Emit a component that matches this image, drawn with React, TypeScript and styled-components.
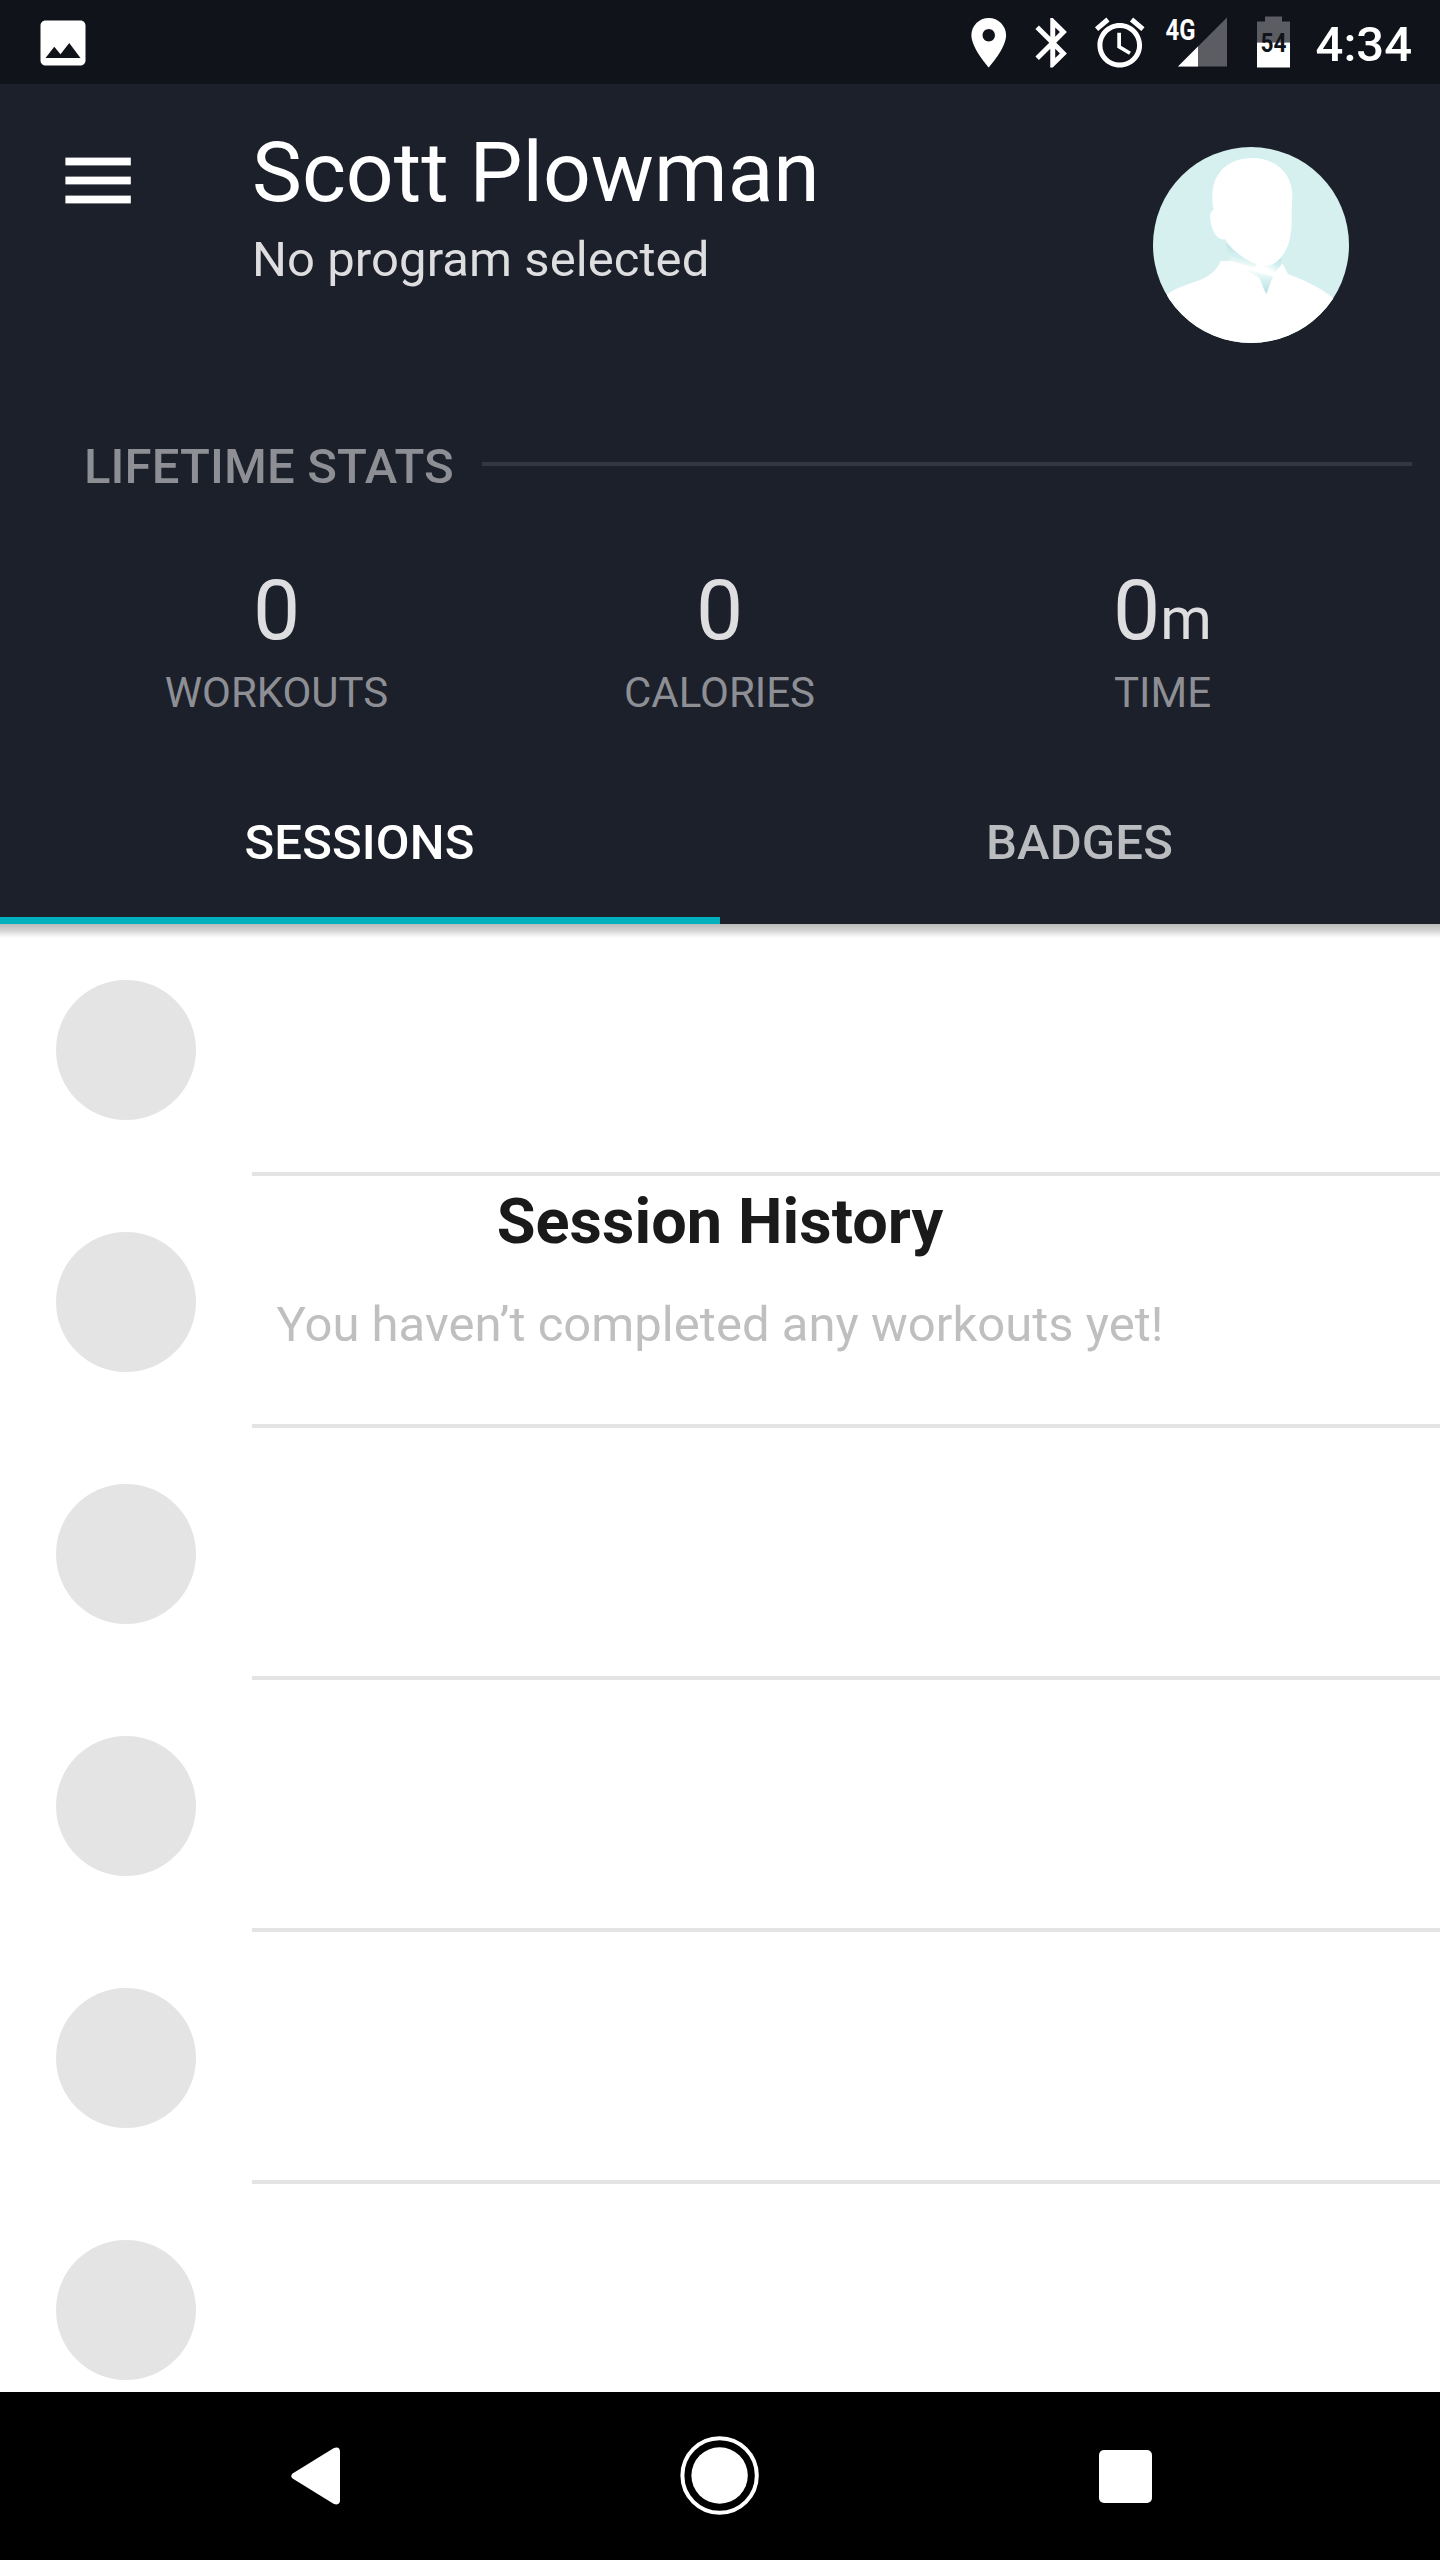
import React from "react";
import styled, { createGlobalStyle } from "styled-components";

const GlobalStyle = createGlobalStyle`
  *, *::before, *::after { box-sizing: border-box; }
  body { margin: 0; background: #ffffff; }
`;

const Screen = styled.div`
  display: flex;
  flex-direction: column;
  width: 1440px;
  height: 2560px;
  overflow: hidden;
  background: #ffffff;
  font-family: Roboto, "Liberation Sans", sans-serif;
`;

/* ---------- status bar ---------- */

const StatusBar = styled.div`
  flex: none;
  display: flex;
  align-items: flex-start;
  height: 84px;
  padding: 12.5px 28px 0 33px;
  background: #10131a;
`;

const StatusIcons = styled.div`
  display: flex;
  align-items: flex-start;
  margin-left: auto;
`;

const StatusIcon = styled.svg<{ $size: number; $gap?: number }>`
  display: block;
  flex: none;
  width: ${(p) => p.$size}px;
  height: ${(p) => p.$size}px;
  margin-right: ${(p) => p.$gap ?? 0}px;
  fill: #ffffff;
`;

const Indicator = styled.svg<{ $gap: number }>`
  display: block;
  flex: none;
  margin-right: ${(p) => p.$gap}px;
  font-family: Roboto, "Liberation Sans", sans-serif;
  font-weight: 700;
`;

const Clock = styled.div`
  color: #ffffff;
  font-size: 49px;
  font-weight: 500;
  line-height: 57px;
  margin-top: 3px;
  white-space: nowrap;
`;

/* ---------- header ---------- */

const Header = styled.header`
  position: relative;
  z-index: 1;
  flex: none;
  display: flex;
  flex-direction: column;
  height: 840px;
  background: #1c202b;

  &::after {
    content: "";
    position: absolute;
    left: 0;
    right: 0;
    top: 100%;
    height: 14px;
    background: linear-gradient(#bababa, #d2d2d2 45%, #f1f1f1 80%, #ffffff);
  }
`;

const ProfileRow = styled.div`
  display: flex;
  align-items: flex-start;
  height: 260px;
`;

const MenuButton = styled.button`
  flex: none;
  width: 252px;
  padding: 73px 0 0 65px;
  border: 0;
  background: none;

  svg { display: block; }
`;

const Identity = styled.div`
  padding-top: 39px;
  white-space: nowrap;
`;

const UserName = styled.h1`
  margin: 0;
  color: #ffffff;
  font-size: 84px;
  font-weight: 400;
  line-height: 99px;
`;

const Program = styled.p`
  margin: 9px 0 0;
  color: #dedee0;
  font-size: 49px;
  letter-spacing: 0.07px;
  line-height: 57px;
`;

const Avatar = styled.svg`
  display: block;
  flex: none;
  width: 196px;
  height: 196px;
  margin: 63px 91px 0 auto;
  border-radius: 50%;
  background: #d6f0ef;
`;

const SectionHeading = styled.div`
  display: flex;
  align-items: center;
  gap: 28px;
  margin: 94px 28px 0 84px;
`;

const SectionTitle = styled.h2`
  margin: 0;
  color: #8e8f95;
  font-size: 49px;
  font-weight: 500;
  letter-spacing: 0.14px;
  line-height: 57px;
  white-space: nowrap;
`;

const SectionRule = styled.div`
  flex: 1;
  height: 4px;
  margin-bottom: 5px;
  background: #343742;
`;

const Stats = styled.div`
  display: grid;
  grid-template-columns: repeat(3, 1fr);
  padding: 66px 56px 0 55px;
  text-align: center;
`;

const StatValue = styled.div`
  height: 99px;
  color: #dedee0;
  font-size: 84px;
  line-height: 99px;
`;

const StatUnit = styled.span`
  font-size: 58.8px;
  line-height: 1;
`;

const StatLabel = styled.div`
  margin-top: 8px;
  color: #8e8f95;
  font-size: 42px;
  line-height: 49px;
`;

const Tabs = styled.div`
  display: flex;
  margin-top: auto;
`;

const Tab = styled.button<{ $active?: boolean }>`
  flex: 1;
  height: 168px;
  padding: 12px 1px 0 0;
  border: 0;
  border-bottom: 7px solid ${(p) => (p.$active ? "#00b1bd" : "transparent")};
  background: none;
  color: ${(p) => (p.$active ? "#ffffff" : "#bbbcc0")};
  font-family: inherit;
  font-size: 49px;
  font-weight: 500;
  letter-spacing: 0.16px;
  line-height: 57px;
`;

/* ---------- session list ---------- */

const SessionList = styled.main`
  position: relative;
  flex: 1;
  min-height: 0;
  overflow: hidden;
`;

const PlaceholderRow = styled.div`
  display: flex;
  align-items: center;
  gap: 56px;
  height: 252px;
  padding-left: 56px;
`;

const PlaceholderDot = styled.div`
  flex: none;
  width: 140px;
  height: 140px;
  border-radius: 50%;
  background: #e4e4e4;
`;

const PlaceholderBody = styled.div`
  flex: 1;
  align-self: stretch;
  border-bottom: 4px solid #e4e4e4;
`;

const EmptyMessage = styled.div`
  position: absolute;
  top: 260px;
  left: 0;
  right: 0;
  text-align: center;
`;

const EmptyTitle = styled.h2`
  margin: 0;
  color: #1a1a1a;
  font-size: 63px;
  font-weight: 700;
  letter-spacing: 0.07px;
  line-height: 75px;
`;

const EmptyText = styled.p`
  margin: 37px 0 0;
  color: #bfbfbf;
  font-size: 49px;
  letter-spacing: 0.03px;
  line-height: 57px;
`;

/* ---------- navigation bar ---------- */

const NavBar = styled.nav`
  flex: none;
  display: flex;
  justify-content: center;
  height: 168px;
  background: #000000;
`;

const NavButton = styled.button`
  display: flex;
  align-items: center;
  justify-content: center;
  width: 405px;
  padding: 0;
  border: 0;
  background: none;

  svg { display: block; fill: #ffffff; }
`;

const HomeRing = styled.circle`
  fill: none;
  stroke: #ffffff;
  stroke-width: 4px;
`;

const stats = [
  { value: "0", label: "WORKOUTS" },
  { value: "0", label: "CALORIES" },
  { value: "0", unit: "m", label: "TIME" },
];

const AvatarPicture = () => (
  <Avatar viewBox="69 51 588 588">
    <defs>
      <linearGradient id="neck" gradientUnits="userSpaceOnUse" x1="330" y1="345" x2="318" y2="412">
        <stop offset="0" stopColor="#bfe5e7" />
        <stop offset="0.55" stopColor="#d6f0f0" />
        <stop offset="1" stopColor="#ffffff" />
      </linearGradient>
      <linearGradient id="neckRight" gradientUnits="userSpaceOnUse" x1="455" y1="385" x2="425" y2="428">
        <stop offset="0" stopColor="#c2e7e8" />
        <stop offset="0.5" stopColor="#d3efef" />
        <stop offset="1" stopColor="#ffffff" />
      </linearGradient>
      <linearGradient id="notch" x1="0" y1="0" x2="0" y2="1">
        <stop offset="0" stopColor="#ffffff" />
        <stop offset="0.45" stopColor="#d9f1f1" />
        <stop offset="1" stopColor="#b4dfe2" />
      </linearGradient>
      <filter id="soften" x="-10%" y="-10%" width="120%" height="120%">
        <feGaussianBlur stdDeviation="2" />
      </filter>
    </defs>
    <path
      fill="#ffffff"
      d="M60 540L108 497C135 470 185 462 225 443C248 431 262 416 272 394L300 392L440 420L458 401L474 432C520 449 570 472 612 506L700 700H50Z"
    />
    <g filter="url(#soften)">
      <path fill="url(#neck)" d="M288 342L300 391C330 404 365 412 400 418L400 390Z" />
      <path fill="url(#neckRight)" d="M380 395L375 414C400 422 420 425 438 425C446 414 452 404 456 388L430 385Z" />
      <path fill="url(#notch)" d="M345 416C362 430 380 436 388 445C396 460 401 480 409 492C415 480 420 458 430 440Z" />
    </g>
    <path
      fill="#ffffff"
      d="M367 84C295 84 247 128 247 200C247 218 248 228 251 238C238 248 238 265 244 284C250 308 262 330 285 328C300 352 325 375 352 389C378 407 405 410 425 404C452 394 477 352 480 322C488 290 483 250 487 200C488 125 430 84 367 84Z"
    />
  </Avatar>
);

export default function App() {
  return (
    <>
      <GlobalStyle />
      <Screen>
        <StatusBar>
          <StatusIcon $size={60} viewBox="0 0 24 24">
            <path d="M21 19V5c0-1.1-.9-2-2-2H5c-1.1 0-2 .9-2 2v14c0 1.1.9 2 2 2h14c1.1 0 2-.9 2-2zM8.5 13.5l2.5 3.01L14.5 12l4.5 6H5l3.5-4.5z" />
          </StatusIcon>
          <StatusIcons>
            <StatusIcon $size={59.5} $gap={4.8} viewBox="0 0 24 24">
              <path d="M12 2C8.13 2 5 5.13 5 9c0 5.25 7 13 7 13s7-7.75 7-13c0-3.87-3.13-7-7-7zm0 9.5c-1.38 0-2.5-1.12-2.5-2.5s1.12-2.5 2.5-2.5 2.5 1.12 2.5 2.5-1.12 2.5-2.5 2.5z" />
            </StatusIcon>
            <StatusIcon $size={59.5} $gap={7.2} viewBox="0 0 24 24">
              <path d="M17.71 7.71L12 2h-1v7.59L6.41 5 5 6.41 10.59 12 5 17.59 6.41 19 11 14.41V22h1l5.71-5.71-4.3-4.29 4.3-4.29zM13 5.83l1.88 1.88L13 9.59V5.83zm1.88 10.46L13 18.17v-3.76l1.88 1.88z" />
            </StatusIcon>
            <StatusIcon $size={59.5} $gap={15.5} viewBox="0 0 24 24">
              <path d="M22 5.72l-4.6-3.86-1.29 1.53 4.6 3.86L22 5.72zM7.88 3.39L6.6 1.86 2 5.71l1.29 1.53 4.59-3.85zM12.5 8H11v6l4.75 2.85.75-1.23-4-2.37V8zM12 4c-4.97 0-9 4.03-9 9s4.02 9 9 9c4.97 0 9-4.03 9-9s-4.03-9-9-9zm0 16c-3.87 0-7-3.13-7-7s3.13-7 7-7 7 3.13 7 7-3.13 7-7 7z" />
            </StatusIcon>
            <Indicator $gap={30} width="62" height="60" viewBox="1165 12.5 62 60">
              <path fill="#5c5d62" d="M1227 17V66H1178Z" />
              <path fill="#ffffff" d="M1198 46V66H1178Z" />
              <text x="1165.5" y="39" fontSize="29.5" fill="#ffffff" textLength="30" lengthAdjust="spacingAndGlyphs">4G</text>
            </Indicator>
            <Indicator $gap={26} width="33" height="60" viewBox="1257 12.5 33 60">
              <path fill="#5c5d62" d="M1265 16H1282V21H1290V42H1257V21H1265Z" />
              <path fill="#ffffff" d="M1257 42H1290V67H1257Z" />
              <text x="1260.5" y="51" fontSize="25" fill="#10131a" textLength="26" lengthAdjust="spacingAndGlyphs">54</text>
            </Indicator>
            <Clock>4:34</Clock>
          </StatusIcons>
        </StatusBar>

        <Header>
          <ProfileRow>
            <MenuButton aria-label="Menu">
              <svg width="66" height="47" viewBox="0 0 66 47" fill="#ffffff">
                <rect x="0.4" y="0.6" width="65.4" height="7.8" />
                <rect x="0.4" y="19.6" width="65.4" height="7.8" />
                <rect x="0.4" y="38.6" width="65.4" height="7.8" />
              </svg>
            </MenuButton>
            <Identity>
              <UserName>Scott Plowman</UserName>
              <Program>No program selected</Program>
            </Identity>
            <AvatarPicture />
          </ProfileRow>

          <SectionHeading>
            <SectionTitle>LIFETIME STATS</SectionTitle>
            <SectionRule />
          </SectionHeading>

          <Stats>
            {stats.map((s) => (
              <div key={s.label}>
                <StatValue>
                  {s.value}
                  {s.unit && <StatUnit>{s.unit}</StatUnit>}
                </StatValue>
                <StatLabel>{s.label}</StatLabel>
              </div>
            ))}
          </Stats>

          <Tabs>
            <Tab $active>SESSIONS</Tab>
            <Tab>BADGES</Tab>
          </Tabs>
        </Header>

        <SessionList>
          {Array.from({ length: 6 }, (_, i) => (
            <PlaceholderRow key={i}>
              <PlaceholderDot />
              <PlaceholderBody />
            </PlaceholderRow>
          ))}
          <EmptyMessage>
            <EmptyTitle>Session History</EmptyTitle>
            <EmptyText>You haven’t completed any workouts yet!</EmptyText>
          </EmptyMessage>
        </SessionList>

        <NavBar>
          <NavButton aria-label="Back">
            <svg width="49" height="58" viewBox="0 0 49 58">
              <path d="M2 26.2L42.5 1.2Q49 -1 49 5V53Q49 59 42.5 56.8L2 31.8Q-1.6 29 2 26.2Z" />
            </svg>
          </NavButton>
          <NavButton aria-label="Home">
            <svg width="80" height="80" viewBox="0 0 80 80">
              <circle cx="39.6" cy="39.5" r="28.2" />
              <HomeRing cx="39.6" cy="39.5" r="37.2" />
            </svg>
          </NavButton>
          <NavButton aria-label="Recent apps">
            <svg width="53" height="53" viewBox="0 0 53 53">
              <rect width="53" height="53" rx="5" />
            </svg>
          </NavButton>
        </NavBar>
      </Screen>
    </>
  );
}
